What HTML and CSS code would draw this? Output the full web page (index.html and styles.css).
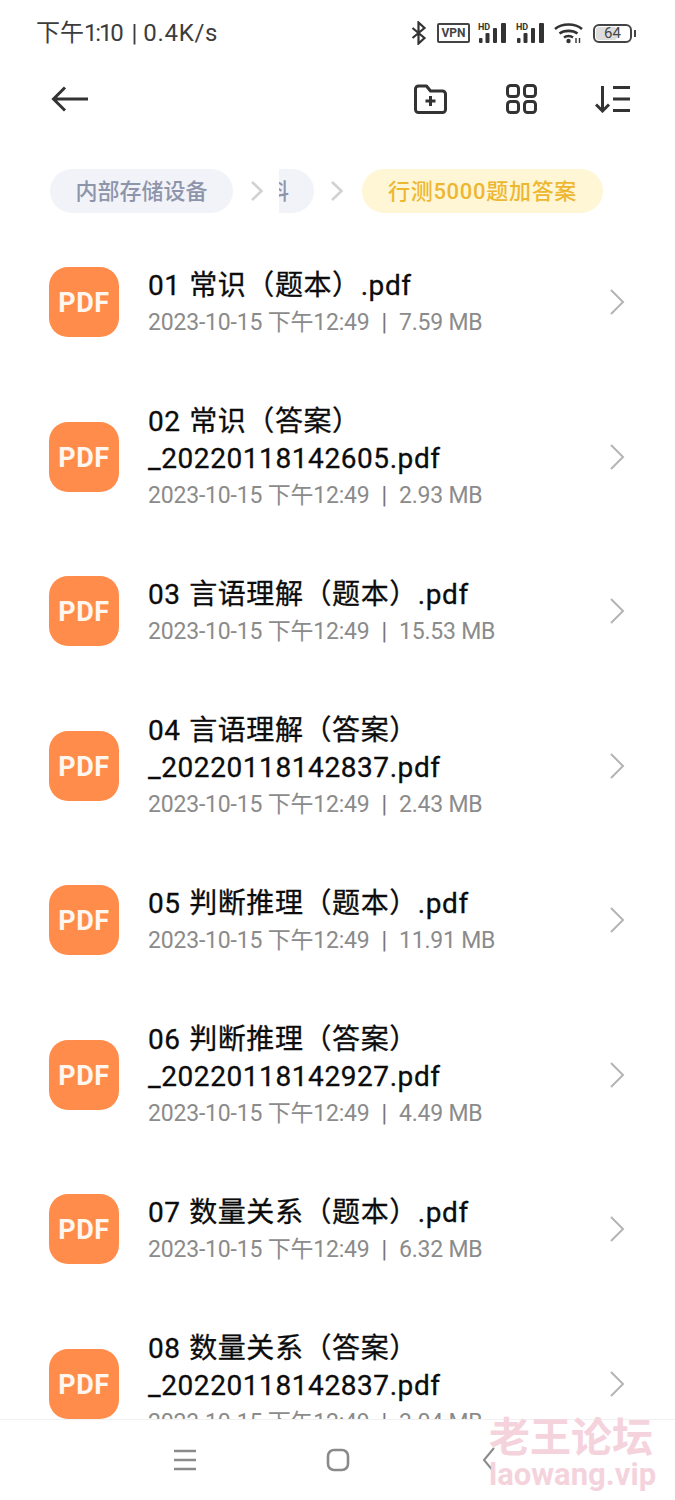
FILE: index.html
```html
<!DOCTYPE html>
<html lang="zh-CN">
<head>
<meta charset="utf-8">
<title>行测5000题加答案</title>
<link rel="stylesheet" href="styles.css">
</head>
<body>
<div class="screen">
  <header class="status">
    <span class="status-text">下午<span class="clock">1:10</span><span class="bar">|</span><span class="speed">0.4K/s</span></span>
    <div class="status-icons">
      <svg class="si" width="16" height="24" viewBox="0 0 16 24"><path d="M1.500 7l12 10L7.500 22.500v-21L13.500 7l-12 10" fill="none" stroke="#333" stroke-width="2.200"/></svg>
      <span class="vpn">VPN</span>
      <svg class="si" width="30" height="22" viewBox="0 0 30 22"><text x="0" y="8" class="hd">HD</text><rect x="1" y="16" width="3.500" height="5" rx="1"/><rect x="7.500" y="11" width="4" height="10" rx="1"/><rect x="15" y="6" width="4" height="15" rx="1"/><rect x="23" y="1" width="5" height="20" rx="1"/></svg>
      <svg class="si" width="30" height="22" viewBox="0 0 30 22"><text x="0" y="8" class="hd">HD</text><rect x="1" y="16" width="3.500" height="5" rx="1"/><rect x="7.500" y="11" width="4" height="10" rx="1"/><rect x="15" y="6" width="4" height="15" rx="1"/><rect x="23" y="1" width="5" height="20" rx="1"/></svg>
      <svg class="si" width="29" height="22" viewBox="0 0 29 22"><g fill="none" stroke="#333" stroke-width="2.600"><path d="M1 7C8 1 21 1 28 7"/><path d="M5.500 11.500C10 8 19 8 23.500 11.500"/><path d="M10 15.500C12.500 13.700 16.500 13.700 19 15.500"/></g><circle cx="14.500" cy="19" r="2.200" fill="#333"/><path d="M22 16v5M25.500 16v5" stroke="#333" stroke-width="1.400"/></svg>
      <div class="battery"><span class="battery-fill"></span><span class="battery-num">64</span></div>
    </div>
  </header>

  <nav class="toolbar">
    <svg width="38" height="28" viewBox="0 0 38 28"><path d="M37 14H3M14 2.500L2.500 14 14 25.500" fill="none" stroke="#333" stroke-width="3"/></svg>
    <div class="tools">
      <svg width="33" height="30" viewBox="0 0 33 30"><path d="M1.500 5a3 3 0 0 1 3-3h8l4 5h12a3 3 0 0 1 3 3v15.500a3 3 0 0 1-3 3h-24a3 3 0 0 1-3-3z" fill="none" stroke="#333" stroke-width="3" stroke-linejoin="round"/><path d="M16.500 12v10M11.500 17h10" stroke="#333" stroke-width="3"/></svg>
      <svg width="31" height="30" viewBox="0 0 31 30"><g fill="none" stroke="#333" stroke-width="3"><rect x="1.500" y="1.500" width="11" height="11" rx="3"/><rect x="18.500" y="1.500" width="11" height="11" rx="3"/><rect x="1.500" y="17.500" width="11" height="11" rx="3"/><rect x="18.500" y="17.500" width="11" height="11" rx="3"/></g></svg>
      <svg width="35" height="28" viewBox="0 0 35 28"><path d="M7.500 1v25M1 19.500L7.500 26l6.500-6.500M18 2.500h17M18 14h17M18 25.500h17" fill="none" stroke="#333" stroke-width="3"/></svg>
    </div>
  </nav>

  <div class="crumbs">
    <span class="pill pill-grey">内部存储设备</span>
    <svg class="crumb-arrow" width="14" height="22" viewBox="0 0 14 22"><path d="M2 2l9.500 9L2 20" fill="none" stroke="#d2d2d2" stroke-width="2.600"/></svg>
    <span class="pill pill-grey pill-cut">料</span>
    <svg class="crumb-arrow crumb-arrow-2" width="14" height="22" viewBox="0 0 14 22"><path d="M2 2l9.500 9L2 20" fill="none" stroke="#d2d2d2" stroke-width="2.600"/></svg>
    <span class="pill pill-yellow">行测5000题加答案</span>
  </div>

  <main class="list">
    <div class="row"><div class="pdf">PDF</div><div class="info"><div class="name">01 常识（题本）.pdf</div><div class="meta">2023-10-15 下午12:49<span class="sep">|</span>7.59 MB</div></div><svg class="chev" width="16" height="28" viewBox="0 0 16 28"><path d="M2 2l12 12L2 26" fill="none" stroke="#b4b4b4" stroke-width="2"/></svg></div>
    <div class="row"><div class="pdf">PDF</div><div class="info"><div class="name">02 常识（答案）<br>_20220118142605.pdf</div><div class="meta">2023-10-15 下午12:49<span class="sep">|</span>2.93 MB</div></div><svg class="chev" width="16" height="28" viewBox="0 0 16 28"><path d="M2 2l12 12L2 26" fill="none" stroke="#b4b4b4" stroke-width="2"/></svg></div>
    <div class="row"><div class="pdf">PDF</div><div class="info"><div class="name">03 言语理解（题本）.pdf</div><div class="meta">2023-10-15 下午12:49<span class="sep">|</span>15.53 MB</div></div><svg class="chev" width="16" height="28" viewBox="0 0 16 28"><path d="M2 2l12 12L2 26" fill="none" stroke="#b4b4b4" stroke-width="2"/></svg></div>
    <div class="row"><div class="pdf">PDF</div><div class="info"><div class="name">04 言语理解（答案）<br>_20220118142837.pdf</div><div class="meta">2023-10-15 下午12:49<span class="sep">|</span>2.43 MB</div></div><svg class="chev" width="16" height="28" viewBox="0 0 16 28"><path d="M2 2l12 12L2 26" fill="none" stroke="#b4b4b4" stroke-width="2"/></svg></div>
    <div class="row"><div class="pdf">PDF</div><div class="info"><div class="name">05 判断推理（题本）.pdf</div><div class="meta">2023-10-15 下午12:49<span class="sep">|</span>11.91 MB</div></div><svg class="chev" width="16" height="28" viewBox="0 0 16 28"><path d="M2 2l12 12L2 26" fill="none" stroke="#b4b4b4" stroke-width="2"/></svg></div>
    <div class="row"><div class="pdf">PDF</div><div class="info"><div class="name">06 判断推理（答案）<br>_20220118142927.pdf</div><div class="meta">2023-10-15 下午12:49<span class="sep">|</span>4.49 MB</div></div><svg class="chev" width="16" height="28" viewBox="0 0 16 28"><path d="M2 2l12 12L2 26" fill="none" stroke="#b4b4b4" stroke-width="2"/></svg></div>
    <div class="row"><div class="pdf">PDF</div><div class="info"><div class="name">07 数量关系（题本）.pdf</div><div class="meta">2023-10-15 下午12:49<span class="sep">|</span>6.32 MB</div></div><svg class="chev" width="16" height="28" viewBox="0 0 16 28"><path d="M2 2l12 12L2 26" fill="none" stroke="#b4b4b4" stroke-width="2"/></svg></div>
    <div class="row"><div class="pdf">PDF</div><div class="info"><div class="name">08 数量关系（答案）<br>_20220118142837.pdf</div><div class="meta">2023-10-15 下午12:49<span class="sep">|</span>3.04 MB</div></div><svg class="chev" width="16" height="28" viewBox="0 0 16 28"><path d="M2 2l12 12L2 26" fill="none" stroke="#b4b4b4" stroke-width="2"/></svg></div>
  </main>

  <footer class="navbar">
    <svg width="24" height="22" viewBox="0 0 24 22"><path d="M1 2h22M1 11h22M1 20h22" stroke="#8a8a8a" stroke-width="2.400"/></svg>
    <svg width="24" height="24" viewBox="0 0 24 24"><rect x="2" y="2" width="20" height="20" rx="6" fill="none" stroke="#8a8a8a" stroke-width="2.600"/></svg>
    <svg class="nav-back" width="14" height="26" viewBox="0 0 14 26"><path d="M12 1L2 13l10 12" fill="none" stroke="#8a8a8a" stroke-width="2"/></svg>
  </footer>

  <div class="watermark">
    <div class="wm-cn">老王论坛</div>
    <div class="wm-en">laowang.vip</div>
  </div>
</div>
</body>
</html>
```

FILE: styles.css
```css
* { box-sizing: border-box; }
html, body { margin: 0; padding: 0; background: #fff; }
body { font-family: Roboto, "Noto Sans CJK SC", sans-serif; }
.screen {
  position: relative;
  width: 675px;
  height: 1500px;
  overflow: hidden;
  display: flex;
  flex-direction: column;
  background: #fff;
}
.status {
  height: 66px;
  flex: none;
  display: flex;
  align-items: center;
  justify-content: space-between;
  padding: 0 43px 0 36px;
}
.status-text { font-size: 24px; color: #3c3c3c; line-height: 32px; }
.clock { letter-spacing: -2.200px; }
.bar { margin: 0 6px 0 10px; }
.speed { letter-spacing: 0.700px; }
.status-icons { display: flex; align-items: center; gap: 8px; }
.si { fill: #333; display: block; flex: none; }
.hd { font: 700 9px Roboto, sans-serif; fill: #333; }
.vpn {
  width: 33px;
  height: 20px;
  margin-left: 2px;
  border: 2px solid #444;
  border-radius: 2px;
  font: 700 12px/16px Roboto, sans-serif;
  color: #444;
  text-align: center;
}
.battery {
  position: relative;
  width: 39px;
  height: 19px;
  margin-left: 2px;
  border: 2px solid #444;
  border-radius: 6px;
  display: flex;
  align-items: center;
  justify-content: center;
}
.battery::after {
  content: "";
  position: absolute;
  right: -6px;
  top: 4px;
  width: 2px;
  height: 7px;
  background: #444;
}
.battery-fill {
  position: absolute;
  left: 1px;
  top: 1px;
  bottom: 1px;
  width: 21px;
  background: #ddd;
  border-radius: 3px;
}
.battery-num { position: relative; font-size: 15px; line-height: 15px; color: #444; }
.toolbar {
  height: 66px;
  flex: none;
  display: flex;
  align-items: center;
  justify-content: space-between;
  padding: 0 45px 0 51px;
}
.tools { display: flex; align-items: center; gap: 58px; }
.tools svg:first-child { margin-right: 1px; }
.tools svg, .toolbar > svg { display: block; }
.crumbs {
  flex: none;
  height: 44px;
  margin-top: 37px;
  padding-left: 50px;
  display: flex;
  align-items: center;
}
.pill {
  height: 44px;
  border-radius: 22px;
  font-size: 22px;
  font-weight: 500;
  line-height: 46px;
  white-space: nowrap;
}
.pill-grey { background: #f1f3f9; color: #8e95ab; padding: 0 25.500px; }
.pill-cut {
  width: 35px;
  padding: 0;
  border-radius: 0 22px 22px 0;
  overflow: hidden;
  text-indent: -12px;
}
.pill-yellow {
  background: #fff6d6;
  color: #eeb731;
  padding: 0 26px;
  margin-left: 18px;
  letter-spacing: 0.700px;
}
.crumb-arrow { margin-left: 17px; flex: none; }
.crumb-arrow + .pill-cut { margin-left: 15px; }
.crumb-arrow-2 { margin-left: 16px; }
.list { flex: 1; min-height: 0; margin-top: 21px; overflow: hidden; }
.row {
  display: flex;
  align-items: center;
  padding: 29px 0 29px 49px;
}
.pdf {
  flex: none;
  width: 70px;
  height: 70px;
  border-radius: 19px;
  background: #ff8c4b;
  color: #fff7ef;
  font-size: 27px;
  font-weight: 700;
  line-height: 72px;
  letter-spacing: 0.500px;
  text-align: center;
}
.info { flex: 1; min-width: 0; margin-left: 29px; padding-top: 4px; }
.name {
  font-size: 28px;
  line-height: 37px;
  color: #0c0c0c;
  letter-spacing: 0.580px;
  word-spacing: 1px;
  -webkit-text-stroke: 0.300px #0c0c0c;
}
.meta { font-size: 23px; line-height: 37px; color: #8b8b8b; letter-spacing: -0.200px; }
.sep { margin: 0 12px; color: #777; }
.chev { flex: none; margin-right: 50px; }
.navbar {
  flex: none;
  height: 81px;
  border-top: 1px solid #f1f1f1;
  background: #fff;
  display: flex;
  align-items: center;
  gap: 129px;
  padding-left: 173px;
}
.nav-back { margin-left: 3px; }
.watermark {
  position: absolute;
  left: 489px;
  top: 1411px;
  color: #f5d3dd;
}
.wm-cn {
  font-size: 41px;
  line-height: 46px;
  font-weight: 700;
  font-family: "Noto Sans CJK SC", sans-serif;
}
.wm-en { font-size: 31px; line-height: 36px; font-weight: 700; }
```
